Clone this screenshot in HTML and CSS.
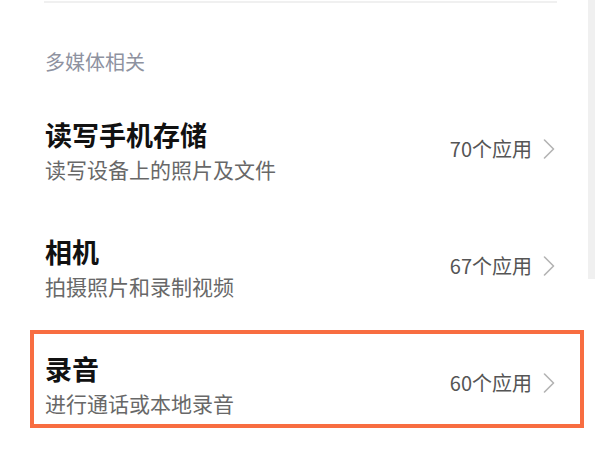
FILE: index.html
```html
<!DOCTYPE html>
<html lang="zh-CN">
<head>
<meta charset="utf-8">
<title>多媒体相关</title>
<link rel="stylesheet" href="styles.css">
</head>
<body>
<div class="page">
  <div class="divider"></div>
  <div class="section-title">多媒体相关</div>
  <div class="list">
    <div class="row">
      <div class="text">
        <div class="title">读写手机存储</div>
        <div class="sub">读写设备上的照片及文件</div>
      </div>
      <div class="meta">
        <span class="count">70个应用</span>
        <svg class="chev" width="12" height="20" viewBox="0 0 12 20"><path d="M1.5 1 L10.5 10 L1.5 19" fill="none" stroke="#b3b3b3" stroke-width="1.6" stroke-linecap="round" stroke-linejoin="round"/></svg>
      </div>
    </div>
    <div class="row">
      <div class="text">
        <div class="title">相机</div>
        <div class="sub">拍摄照片和录制视频</div>
      </div>
      <div class="meta">
        <span class="count">67个应用</span>
        <svg class="chev" width="12" height="20" viewBox="0 0 12 20"><path d="M1.5 1 L10.5 10 L1.5 19" fill="none" stroke="#b3b3b3" stroke-width="1.6" stroke-linecap="round" stroke-linejoin="round"/></svg>
      </div>
    </div>
    <div class="row highlight">
      <div class="text">
        <div class="title">录音</div>
        <div class="sub">进行通话或本地录音</div>
      </div>
      <div class="meta">
        <span class="count">60个应用</span>
        <svg class="chev" width="12" height="20" viewBox="0 0 12 20"><path d="M1.5 1 L10.5 10 L1.5 19" fill="none" stroke="#b3b3b3" stroke-width="1.6" stroke-linecap="round" stroke-linejoin="round"/></svg>
      </div>
    </div>
  </div>
  <div class="scroll-strip"></div>
</div>
</body>
</html>
```

FILE: styles.css
```css
html, body {
  margin: 0;
  padding: 0;
  background: #ffffff;
}

body {
  font-family: "Noto Sans CJK SC", "Noto Sans", sans-serif;
}

.page {
  position: relative;
  width: 600px;
  height: 450px;
  overflow: hidden;
  background: #ffffff;
}

.divider {
  margin: 1px 43px 0 44px;
  height: 2px;
  background: #f0f0f0;
}

.section-title {
  margin-top: 47px;
  padding-left: 45px;
  font-size: 20px;
  line-height: 24px;
  color: #8e92a0;
}

.list {
  margin-top: 22px;
  display: flex;
  flex-direction: column;
  gap: 19px;
}

.row {
  margin-left: 30px;
  width: 554px;
  box-sizing: border-box;
  height: 98px;
  border: 4.5px solid transparent;
  padding: 18px 25px 4px 11px;
  display: flex;
  align-items: center;
  justify-content: space-between;
}

.row.highlight {
  border-color: #f86d41;
}

.text {
  display: flex;
  flex-direction: column;
}

.title {
  font-size: 27px;
  line-height: 34px;
  font-weight: 700;
  color: #111111;
}

.sub {
  font-size: 21px;
  line-height: 34px;
  color: #686868;
}

.meta {
  display: flex;
  align-items: center;
  gap: 11px;
  margin-top: -6px;
}

.count {
  font-size: 20px;
  line-height: 24px;
  color: #555555;
}

.chev {
  display: block;
}

.scroll-strip {
  position: absolute;
  left: 588px;
  top: 0;
  width: 7px;
  height: 279px;
  background: #f0f0f0;
}
```
